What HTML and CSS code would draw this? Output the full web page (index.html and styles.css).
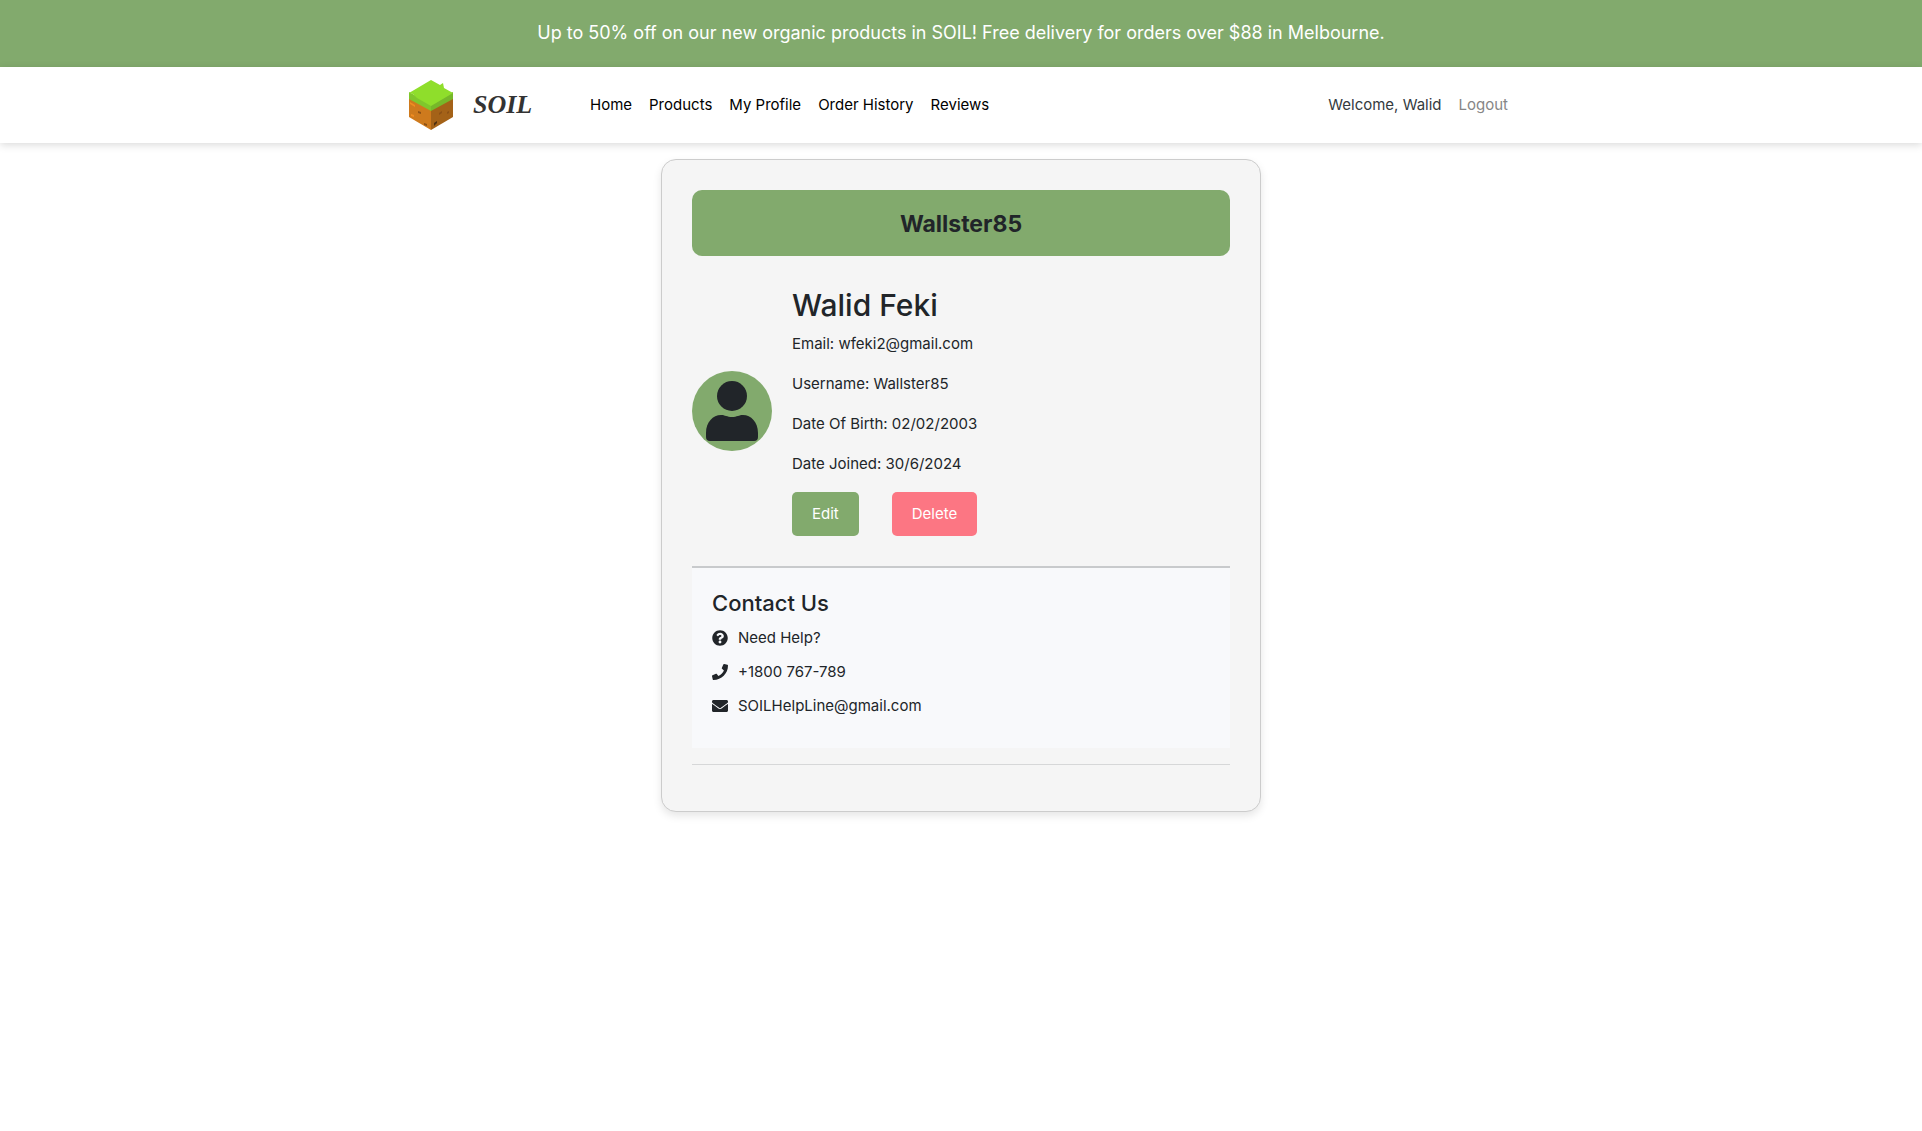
FILE: index.html
```html
<!DOCTYPE html>
<html lang="en">
<head>
<meta charset="utf-8">
<meta name="viewport" content="width=device-width, initial-scale=1">
<title>SOIL - My Profile</title>
<link rel="stylesheet" href="styles.css">
</head>
<body>
<p class="promo">Up to 50% off on our new organic products in SOIL! Free delivery for orders over $88 in Melbourne.</p>
<header class="site-header">
  <nav class="nav">
    <a class="brand" href="#">
      <svg class="brand-cube" viewBox="0 0 44 50" aria-hidden="true">
        <path fill="#ce7a1d" d="M0 14 22 28V50L0 37Z"/>
        <path fill="#a46218" d="M44 14 22 28V50L44 37Z"/>
        <path fill="#7fc72c" d="M0 12 22 24V31L0 19Z"/>
        <path fill="#76b82a" d="M44 12 22 24V31L44 19Z"/>
        <path fill="#8fde2b" d="M22 0 31 5 34 3 35 8 44 13 22 26 8 18 4 14 0 13Z"/>
        <path fill="#f08c22" d="M1 22l5 3v2l-5-3zM2 34l3 1v2l-3-1z"/>
        <path fill="#8d5115" d="M9 31l3 1v2l-3-1zM15 43l3 1v2l-3-1zM30 33l3-2v2l-3 2zM38 32l2-1v2l-2 1z"/>
        <path fill="#4f3010" d="M25 43l3-2v2l-3 3z"/>
      </svg>
      <span class="brand-name">SOIL</span>
    </a>
    <div class="nav-links">
      <a href="#">Home</a>
      <a href="#">Products</a>
      <a href="#">My Profile</a>
      <a href="#">Order History</a>
      <a href="#">Reviews</a>
    </div>
    <div class="nav-user">
      <span>Welcome, Walid</span>
      <a class="logout" href="#">Logout</a>
    </div>
  </nav>
</header>
<main class="card">
  <h1 class="card-title">Wallster85</h1>
  <section class="profile">
    <div class="avatar">
      <svg viewBox="0 0 60 68" aria-hidden="true"><circle cx="30" cy="19" r="15"/><path d="M4 60V56C4 45 11 38 19 38C23 38 25 40 30 40S37 38 41 38C49 38 56 45 56 56V60Q56 64 52 64H8Q4 64 4 60Z"/></svg>
    </div>
    <div class="details">
      <h2 class="name">Walid Feki</h2>
      <p>Email: wfeki2@gmail.com</p>
      <p>Username: Wallster85</p>
      <p>Date Of Birth: 02/02/2003</p>
      <p>Date Joined: 30/6/2024</p>
      <div class="actions">
        <button class="btn" type="button">Edit</button>
        <button class="btn btn-danger" type="button">Delete</button>
      </div>
    </div>
  </section>
  <section class="contact">
    <h3>Contact Us</h3>
    <ul>
      <li><svg viewBox="0 0 512 512" aria-hidden="true"><path d="M504 256c0 137-111 248-248 248S8 393 8 256 119 8 256 8s248 111 248 248zM262.700 90c-54.500 0-89.300 23-116.500 63.800-3.500 5.300-2.400 12.400 2.700 16.300l34.700 26.300c5.200 3.900 12.600 3 16.700-2.100 17.900-22.700 30.100-35.800 57.300-35.800 20.400 0 45.700 13.100 45.700 33 0 15-12.400 22.700-32.500 34C247.100 238.500 216 254.900 216 296v4c0 6.600 5.400 12 12 12h56c6.600 0 12-5.400 12-12v-1.300c0-28.500 83.200-29.600 83.200-106.700 0-58-60.200-102-116.500-102zM256 338c-25.400 0-46 20.600-46 46s20.600 46 46 46 46-20.600 46-46-20.600-46-46-46z"/></svg>Need Help?</li>
      <li><svg viewBox="0 0 512 512" aria-hidden="true"><path d="M493.400 24.600l-104-24c-11.300-2.600-22.900 3.300-27.500 13.900l-48 112c-4.200 9.800-1.400 21.300 6.900 28l60.600 49.600c-36 76.700-98.900 140.500-177.200 177.200l-49.600-60.600c-6.800-8.300-18.200-11.100-28-6.900l-112 48C3.900 366.500-2 378.100.600 389.400l24 104C27.100 504.200 36.700 512 48 512c256.100 0 464-207.500 464-464 0-11.200-7.700-20.900-18.600-23.400z"/></svg>+1800 767-789</li>
      <li><svg viewBox="0 0 512 512" aria-hidden="true"><path d="M502.300 190.800c3.900-3.100 9.700-.2 9.700 4.700V400c0 26.500-21.500 48-48 48H48c-26.500 0-48-21.500-48-48V195.600c0-5 5.700-7.800 9.700-4.700 22.400 17.400 52.100 39.500 154.100 113.600 21.100 15.400 56.700 47.800 92.200 47.600 35.700.3 72-32.800 92.300-47.600 102-74.100 131.600-96.300 154-113.700zM256 320c23.200.4 56.600-29.200 73.400-41.400 132.700-96.300 142.800-104.700 173.400-128.700 5.800-4.500 9.200-11.500 9.200-18.900v-19c0-26.500-21.500-48-48-48H48c-26.500 0-48 21.500-48 48v19c0 7.400 3.400 14.300 9.200 18.900 30.600 23.900 40.700 32.400 173.400 128.700 16.800 12.200 50.200 41.800 73.400 41.400z"/></svg>SOILHelpLine@gmail.com</li>
    </ul>
  </section>
  <hr class="divider">
</main>
</body>
</html>
```
FILE: styles.css
```css
* { box-sizing: border-box; }
body { margin: 0; background: #fff; color: #212529; font-family: Inter, "Liberation Sans", sans-serif; font-size: 15px; line-height: 24px; }
h1, h2, h3, p, ul { margin: 0; padding: 0; }
a { color: inherit; text-decoration: none; }

.promo { padding: 18px 16px 19px; background: #82aa6d; color: #fff; font-size: 18px; line-height: 30px; text-align: center; }

.site-header { box-shadow: 0 2px 8px rgba(0, 0, 0, 0.15); }
.nav { display: flex; align-items: center; max-width: 1140px; margin: 0 auto; padding: 13px 23px 13px 18px; }
.brand { display: flex; align-items: center; gap: 20px; width: 181px; color: #333; }
.brand-cube { width: 44px; height: 50px; }
.brand-name { font-family: "Liberation Serif", serif; font-size: 26px; font-style: italic; font-weight: 700; }
.nav-links, .nav-user { display: flex; gap: 17px; }
.nav-links { color: #000; }
.nav-user { margin-left: auto; color: #343a40; }
.logout { color: #868686; }

.card { max-width: 600px; margin: 16px auto; padding: 30px; background: #f5f5f5; border: 1px solid #ccc; border-radius: 15px; box-shadow: 0 4px 8px rgba(0, 0, 0, 0.1); }
.card-title { padding: 19px 16px 17px; background: #82aa6d; border-radius: 10px; font-size: 23px; line-height: 30px; font-weight: 700; text-align: center; }
.profile { display: flex; align-items: center; gap: 20px; margin: 30px 0; }
.avatar { display: flex; justify-content: center; align-items: center; width: 80px; height: 80px; background: #82aa6d; border-radius: 50%; }
.avatar svg { width: 60px; height: 68px; fill: #212529; }
.details p { margin-bottom: 16px; }
.name { margin-bottom: 8px; font-size: 30px; line-height: 38px; font-weight: 500; }
.actions { display: flex; justify-content: space-between; }
.btn { padding: 10px 20px; border: 0; border-radius: 5px; background: #82aa6d; color: #fff; font: inherit; cursor: pointer; }
.btn-danger { background: #fc7683; }

.contact { padding: 20px; background: #f8f9fb; border-top: 2px solid #c8cacc; }
.contact h3 { margin-bottom: 8px; font-size: 22px; line-height: 30px; font-weight: 500; }
.contact ul { list-style: none; }
.contact li { display: flex; align-items: center; gap: 10px; margin-bottom: 10px; }
.contact svg { width: 16px; height: 16px; fill: #212529; }
.divider { margin: 16px 0; border: 0; border-top: 1px solid #d6d7d8; }
```
